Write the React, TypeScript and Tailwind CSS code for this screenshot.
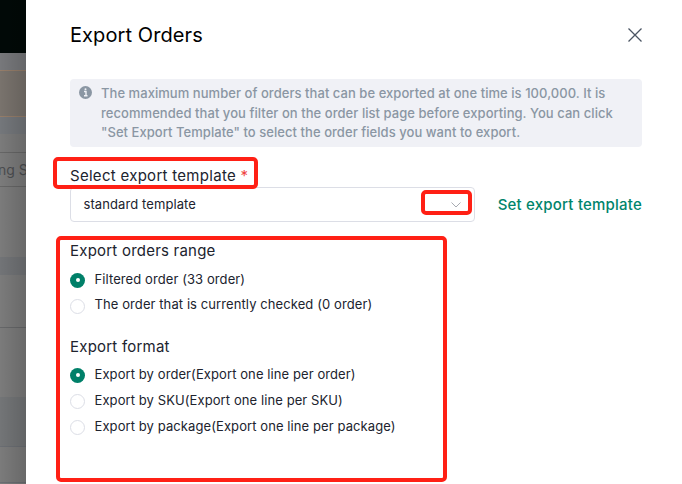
import { useState } from "react";

type RadioProps = {
  label: string;
  checked: boolean;
  className: string;
  onChange: () => void;
};

function Radio({ label, checked, className, onChange }: RadioProps) {
  return (
    <button
      type="button"
      role="radio"
      aria-checked={checked}
      onClick={onChange}
      className="flex h-[26px] w-fit items-center gap-[9.5px]"
    >
      {checked ? (
        <span className="flex size-[15px] shrink-0 items-center justify-center rounded-full bg-[#008069]">
          <span className="size-1 rounded-full bg-white" />
        </span>
      ) : (
        <span className="size-[15px] shrink-0 rounded-full border border-[#dcdee6] bg-white" />
      )}
      <span className={`whitespace-nowrap text-[13px] leading-5 tracking-[0.09px] ${className}`}>
        {label}
      </span>
    </button>
  );
}

const ranges = [
  { label: "Filtered order (33 order)", className: "pb-0.5" },
  { label: "The order that is currently checked (0 order)", className: "pb-1" },
];

const formats = [
  { label: "Export by order(Export one line per order)", className: "pb-0.5" },
  { label: "Export by SKU(Export one line per SKU)", className: "pb-0.5" },
  { label: "Export by package(Export one line per package)", className: "pb-0.5" },
];

export default function App() {
  const [range, setRange] = useState(0);
  const [format, setFormat] = useState(0);

  return (
    <div className="relative flex h-[484px] w-[682px] overflow-hidden bg-white font-['Inter',sans-serif] text-[#20232e]">
      {/* Dimmed page behind the drawer */}
      <aside className="relative w-[26px] shrink-0 overflow-hidden bg-[#7b7b7b]">
        <div className="h-[53px] bg-[#010907]" />
        <div className="h-[17px] bg-[#77787b]" />
        <div className="h-[47px] border-y border-[#957d69] bg-[#79736d]" />
        <div className="h-[17px] bg-[#74777b]" />
        <div className="h-[18px]" />
        <div className="flex h-[35px] items-center border-y border-[#666]">
          <span className="-ml-0.5 whitespace-nowrap text-[14px] text-[#4b4d50]">ng Se</span>
        </div>
        <div className="h-[70px]" />
        <div className="h-[18px] bg-[#727477]" />
        <div className="h-[53px] border-b border-[#666769]" />
        <div className="h-[69px]" />
        <div className="h-[50px] border-b border-[#6b6e73] bg-[#737577]" />
        <div className="h-[36px] border-b border-[#6b6e73]" />
        <div className="absolute inset-0 bg-linear-to-r from-transparent to-black/15" />
      </aside>

      {/* Export drawer */}
      <main className="flex w-[656px] flex-col pl-11 pr-10">
        <header className="flex h-[79px] items-start justify-between pt-[21px]">
          <h1 className="text-[20px] leading-7 tracking-[0.09px] text-black">Export Orders</h1>
          <button type="button" aria-label="Close" className="mt-[7px]">
            <svg width="14" height="14" viewBox="0 0 14 14" fill="none" stroke="#4b5563" strokeWidth="1.3">
              <path d="M.5.5l13 13M13.5.5l-13 13" />
            </svg>
          </button>
        </header>

        <section className="flex h-[68px] gap-[9px] rounded bg-[#f0f1f6] pl-[9px] pt-[5px] text-[#8a96a3]">
          <svg className="mt-[2px] shrink-0" width="13" height="13" viewBox="0 0 13 13">
            <circle cx="6.5" cy="6.5" r="6.5" fill="currentColor" />
            <path d="M5 5.5h2v4M5 9.8h3.5" fill="none" stroke="#f0f1f6" strokeWidth="1.4" />
            <circle cx="6.5" cy="3.2" r="1" fill="#f0f1f6" />
          </svg>
          <p className="text-[13px] font-medium leading-[19.5px] tracking-[0.05px] whitespace-nowrap">
            <span>The maximum number of orders that can be exported at one time is 100,000. It is</span>
            <br />
            <span>recommended that you filter on the order list page before exporting. You can click</span>
            <br />
            <span>"Set Export Template" to select the order fields you want to export.</span>
          </p>
        </section>

        <h2 className="mt-[18px] h-[22px] text-[15px] leading-[22px] tracking-[0.29px]">
          Select export template <span className="text-[#f04444]">*</span>
        </h2>
        <div className="flex items-center justify-between">
          <button
            type="button"
            className="flex h-[35px] w-[405px] items-center justify-between rounded border border-[#dcdee6] pl-[12.5px] pr-[13px] text-[13px] tracking-[0.09px]"
          >
            <span>standard template</span>
            <svg width="10" height="6" viewBox="0 0 10 6" fill="none" stroke="#a8abb2">
              <path d="M.5.5L5 5 9.5.5" />
            </svg>
          </button>
          <a href="#" className="pt-0.5 text-[15px] font-medium tracking-[0.21px] text-[#00846b]">
            Set export template
          </a>
        </div>

        <section className="pt-[18px]">
          <h2 className="text-[15px] leading-[22px] tracking-[0.22px]">Export orders range</h2>
          <div role="radiogroup" className="pt-[5px]">
            {ranges.map((item, i) => (
              <Radio key={item.label} {...item} checked={range === i} onChange={() => setRange(i)} />
            ))}
          </div>
        </section>

        <section className="pt-[17px]">
          <h2 className="text-[15px] leading-[22px] tracking-[0.22px]">Export format</h2>
          <div role="radiogroup" className="pt-1">
            {formats.map((item, i) => (
              <Radio key={item.label} {...item} checked={format === i} onChange={() => setFormat(i)} />
            ))}
          </div>
        </section>
      </main>

      {/* Highlight frames */}
      <div className="pointer-events-none absolute left-[53px] top-[157px] h-[32px] w-[205px] rounded-[5px] border-4 border-[#ff2015]" />
      <div className="pointer-events-none absolute left-[421px] top-[190px] h-[25px] w-[51px] rounded-[5px] border-4 border-[#ff2015]" />
      <div className="pointer-events-none absolute left-[56px] top-[236px] h-[246px] w-[391px] rounded-[5px] border-4 border-[#ff2015]" />
    </div>
  );
}
